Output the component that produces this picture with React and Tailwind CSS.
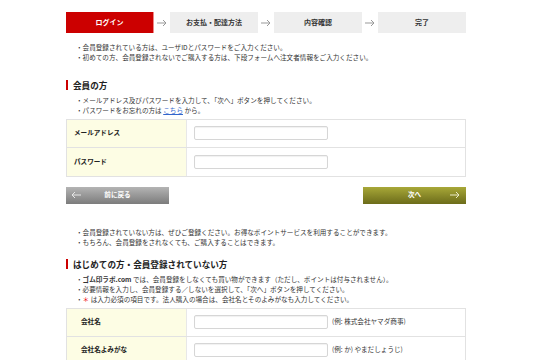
import React from 'react';

const font = { fontFamily: '"Noto Sans CJK JP", "Noto Sans", sans-serif' };

// step arrow between the step boxes
const StepArrow = () => (
  <div className="w-4 flex items-center justify-center">
    <svg width="10" height="8" viewBox="0 0 10 8" fill="none" stroke="#999" strokeWidth="1">
      <path d="M0 4h9M6 1l3 3-3 3" />
    </svg>
  </div>
);

const Steps = () => {
  const steps = ['ログイン', 'お支払・配達方法', '内容確認', '完了'];
  return (
    <div className="flex h-[21px]">
      {steps.map((s, i) => (
        <React.Fragment key={s}>
          {i > 0 && <StepArrow />}
          <div
            className={`w-[88px] flex items-center justify-center text-[7px] font-bold ${
              i === 0 ? 'bg-[#cc0000] text-white border-r border-[#e88]' : 'bg-[#eeeeee] text-[#333]'
            }`}
          >
            {s}
          </div>
        </React.Fragment>
      ))}
    </div>
  );
};

const Notes = ({ children, className = '' }) => (
  <ul className={`pl-[10px] text-[6.6px] leading-[10px] text-[#333] ${className}`}>{children}</ul>
);

const Heading = ({ children }) => (
  <div className="flex items-center gap-[5px]">
    <div className="w-[2px] h-[10px] bg-[#cc0000]" />
    <h2 className="text-[8.6px] font-bold text-[#222]">{children}</h2>
  </div>
);

const Input = () => (
  <div className="w-[134px] h-[14px] bg-white border border-[#d6d6d6] rounded-[2px] shadow-[inset_0_1px_1px_rgba(0,0,0,0.06)]" />
);

const Row = ({ label, note, indent, last }) => (
  <div className={`flex h-[28px] ${last ? '' : 'border-b border-[#e2e2e2]'}`}>
    <div
      className={`w-[120px] bg-[#fdfde4] border-r border-[#e8e8e8] flex items-center text-[6.6px] font-bold text-[#222] ${
        indent ? 'pl-[14px]' : 'pl-[7px]'
      }`}
    >
      {label}
    </div>
    <div className="flex-1 flex items-center pl-[7px] gap-[4px]">
      <Input />
      {note && <span className="text-[6.6px] text-[#333]">{note}</span>}
    </div>
  </div>
);

export default function App() {
  return (
    <div className="w-[540px] h-[360px] overflow-hidden bg-white" style={font}>
      <div className="ml-[66px] w-[400px] pt-[12px]">
        <Steps />

        <Notes className="mt-[9px]">
          <li>・会員登録されている方は、ユーザIDとパスワードをご入力ください。</li>
          <li>・初めての方、会員登録されないでご購入する方は、下段フォームへ注文者情報をご入力ください。</li>
        </Notes>

        <div className="mt-[17px]">
          <Heading>会員の方</Heading>
        </div>
        <Notes className="mt-[3px]">
          <li>・メールアドレス及びパスワードを入力して、「次へ」ボタンを押してください。</li>
          <li>
            ・パスワードをお忘れの方は <a className="text-[#3366cc] underline">こちら</a> から。
          </li>
        </Notes>

        <div className="mt-[4px] border border-[#e2e2e2]">
          <Row label="メールアドレス" />
          <Row label="パスワード" last />
        </div>

        <div className="mt-[10px] flex justify-between">
          <button className="relative w-[103px] h-[17px] bg-gradient-to-b from-[#b4b4b4] to-[#7c7c7c] text-white text-[6.6px] font-bold flex items-center justify-center">
            <svg className="absolute left-[5px]" width="10" height="8" viewBox="0 0 10 8" fill="none" stroke="#e6e6e6" strokeWidth="1">
              <path d="M10 4H1M4 1L1 4l3 3" />
            </svg>
            前に戻る
          </button>
          <button className="relative w-[103px] h-[17px] bg-gradient-to-b from-[#a8a838] to-[#6c6c1a] text-white text-[6.6px] font-bold flex items-center justify-center">
            次へ
            <svg className="absolute right-[6px]" width="10" height="8" viewBox="0 0 10 8" fill="none" stroke="#eaeac8" strokeWidth="1">
              <path d="M0 4h9M6 1l3 3-3 3" />
            </svg>
          </button>
        </div>

        <Notes className="mt-[23px]">
          <li>・会員登録されていない方は、ぜひご登録ください。お得なポイントサービスを利用することができます。</li>
          <li>・もちろん、会員登録をされなくても、ご購入することはできます。</li>
        </Notes>

        <div className="mt-[11px]">
          <Heading>はじめての方・会員登録されていない方</Heading>
        </div>
        <Notes className="mt-[3px] leading-[9px]">
          <li>
            ・<b>ゴム印ラボ.com</b> では、会員登録をしなくても買い物ができます（ただし、ポイントは付与されません）。
          </li>
          <li>・必要情報を入力し、会員登録する／しないを選択して、「次へ」ボタンを押してください。</li>
          <li>
            ・<span className="text-[#e00]">＊</span> は入力必須の項目です。法人購入の場合は、会社名とそのよみがなも入力してください。
          </li>
        </Notes>

        <div className="mt-[4px] border border-[#e2e2e2]">
          <Row label="会社名" note="(例: 株式会社ヤマダ商事)" indent />
          <Row label="会社名よみがな" note="(例: か) やまだしょうじ)" indent />
        </div>
      </div>
    </div>
  );
}
